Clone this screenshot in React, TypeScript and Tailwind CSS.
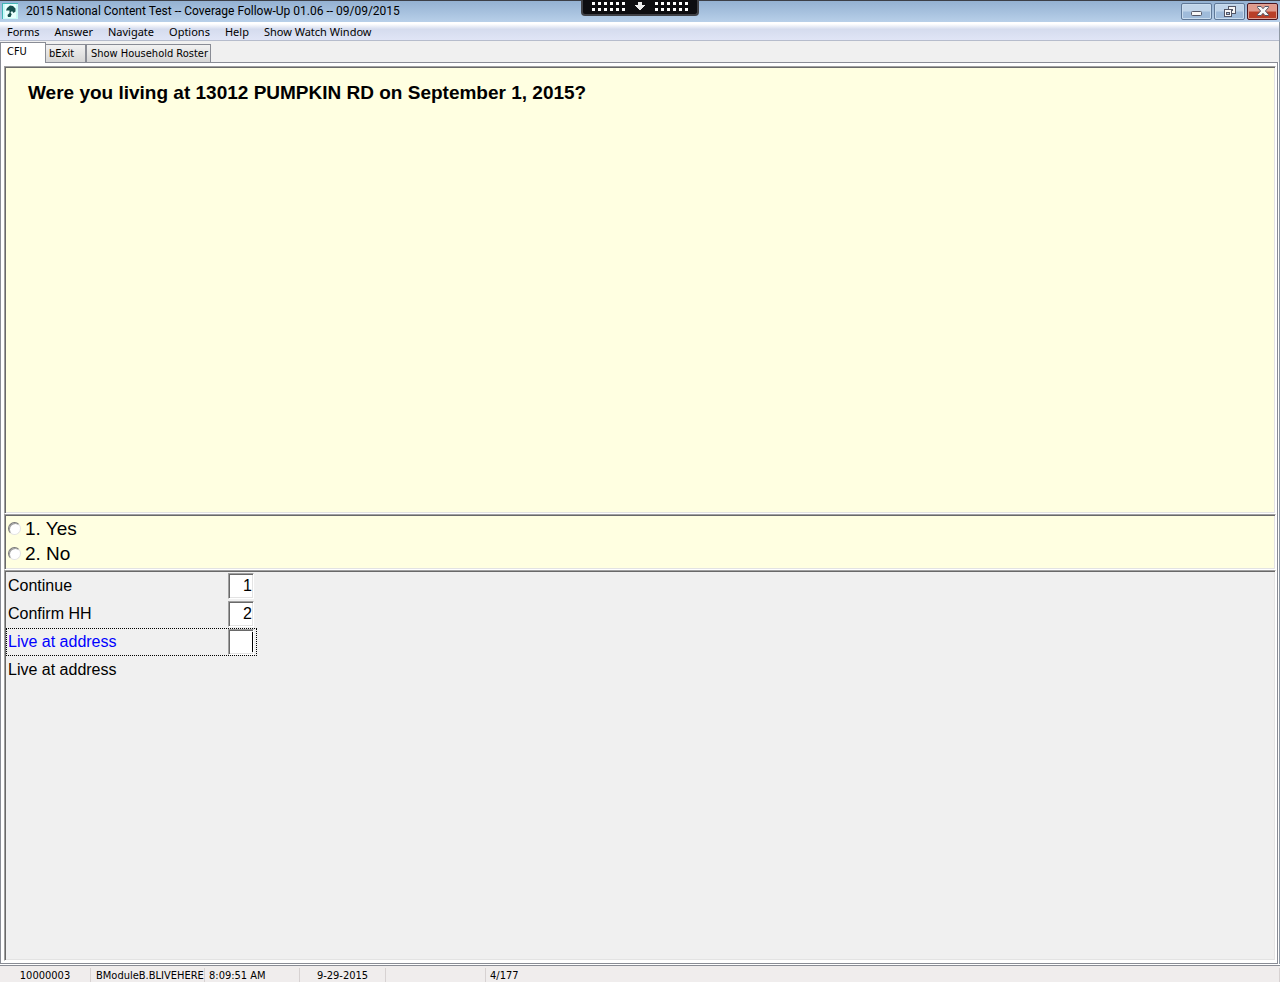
import React, { useState } from 'react';

const MENU_ITEMS = ['Forms', 'Answer', 'Navigate', 'Options', 'Help', 'Show Watch Window'];

const ANSWERS = [
  { value: '1', label: '1. Yes' },
  { value: '2', label: '2. No' },
];

// Two-tone bevel: light grey outside, dark grey inside
const SUNKEN = 'border border-t-[#a0a0a0] border-l-[#a0a0a0] border-r-white border-b-white shadow-[inset_1px_1px_0_#696969,inset_-1px_-1px_0_#e3e3e3]';

const AppIcon = () => (
  <svg width="16" height="16" viewBox="0 0 16 16">
    <rect width="16" height="16" fill="#42b5b5" />
    <rect x="1" y="1" width="15" height="15" fill="#c9fbf8" />
    <rect x="3" y="1" width="11" height="14" fill="#e9fffd" />
    <path d="M5 5L8 2.5 11 3 13.5 5.5v3l-2 1.5L10 8 8.5 9.5l1.2 1.8L8.5 14H6L5.5 12l2-2V7.5L4 7.5z" fill="#17504e" />
  </svg>
);

const MinimizeIcon = () => (
  <svg width="11" height="5" viewBox="0 0 11 5">
    <rect x="0.5" y="0.5" width="10" height="4" rx="1" fill="#f7f7f7" stroke="#535666" />
  </svg>
);

const RestoreIcon = () => (
  <svg width="12" height="11" viewBox="0 0 12 11" shapeRendering="crispEdges">
    <path d="M4 0h8v8H4z" fill="#535666" />
    <path d="M5 1h6v6H5z" fill="#f7f7f7" />
    <path d="M7 3h2v2H7z" fill="#535666" />
    <path d="M0 3h8v8H0z" fill="#535666" />
    <path d="M1 4h6v6H1z" fill="#f7f7f7" />
    <path d="M2 6h4v3H2z" fill="#535666" />
    <path d="M3 7h2v1H3z" fill="#a9c4e0" />
  </svg>
);

const CloseIcon = () => (
  <svg width="12" height="10" viewBox="0 0 12 10">
    <path
      d="M0.5 0.5h3.6L6 2.7 7.9 0.5h3.6v1L8.4 5l3.1 3.5v1H7.9L6 7.3 4.1 9.5H0.5v-1L3.6 5 0.5 1.5z"
      fill="#f7f7f7"
      stroke="#535666"
    />
  </svg>
);

const DOT_COLUMNS = [0, 6, 12, 18, 24, 30];

const Dots = () => (
  <svg width="33" height="9" viewBox="0 0 33 9" shapeRendering="crispEdges" fill="#fff">
    {DOT_COLUMNS.map(x => (
      <path key={x} d={`M${x} 0h3v3h-3zM${x} 6h3v3h-3z`} />
    ))}
  </svg>
);

const TitleBar = () => (
  <header className="relative flex h-[22px] items-center justify-between border-t border-[#3c3f47] bg-linear-to-b from-[#94b1d2] to-[#b8d0e9] pr-0.5 pb-px pl-0.5">
    <div className="flex items-center gap-2">
      <AppIcon />
      <h1 className="font-['Roboto','Noto_Sans',sans-serif] text-[12px] leading-4">
        2015 National Content Test -- Coverage Follow-Up 01.06 -- 09/09/2015
      </h1>
    </div>

    <div className="flex gap-0.5">
      <button aria-label="Minimize" className="flex h-[17px] w-[31px] items-end justify-center rounded-xs border border-[#5f7897] bg-linear-to-b from-[#c0d4e9] from-45% to-[#9fbbda] to-55% pb-[3px] shadow-[inset_0_0_0_1px_#c9dcee]">
        <MinimizeIcon />
      </button>
      <button aria-label="Restore" className="flex h-[17px] w-[31px] items-center justify-center rounded-xs border border-[#5f7897] bg-linear-to-b from-[#c0d4e9] from-45% to-[#9fbbda] to-55% shadow-[inset_0_0_0_1px_#c9dcee]">
        <RestoreIcon />
      </button>
      <button aria-label="Close" className="flex h-[17px] w-[31px] items-center justify-center rounded-xs border border-[#4b1620] bg-linear-to-b from-[#e09a8c] from-45% to-[#b93f28] to-55% shadow-[inset_0_0_0_1px_#dfa295]">
        <CloseIcon />
      </button>
    </div>

    {/* Remote session handle */}
    <div className="absolute -top-px left-1/2 flex h-4 w-[118px] -translate-x-1/2 items-start justify-center gap-[9px] rounded-b border-2 border-t-0 border-[#3f4045] bg-[#0d0d10] pt-0.5">
      <Dots />
      <svg width="12" height="9" viewBox="0 0 12 9" shapeRendering="crispEdges">
        <path d="M4 0h4v3h3v1h-1v1H9v1H8v1H7v1H5V7H4V6H3V5H2V4H1V3h3z" fill="#ececec" />
      </svg>
      <Dots />
    </div>
  </header>
);

const MenuBar = () => (
  <nav className="flex h-[19px] items-center gap-[15px] border-b border-[#b6bccc] bg-linear-to-b from-white from-10% via-[#d5dcee] via-40% to-[#e0e5f6] px-[7px] pt-px">
    {MENU_ITEMS.map(item => (
      <button key={item} className="font-['Noto_Sans',sans-serif] text-[11px] leading-4 whitespace-nowrap">
        {item}
      </button>
    ))}
  </nav>
);

const TabStrip = () => (
  <div role="tablist" className="flex h-[21px] items-end bg-[#f0f0f0] font-['DejaVu_Sans_Condensed','DejaVu_Sans',sans-serif] text-[11px] leading-4">
    <button role="tab" aria-selected className="z-10 -mb-px h-[21px] w-[46px] border border-b-0 border-[#898c95] bg-white pb-0.5 pl-1.5 text-left">
      CFU
    </button>
    <button role="tab" aria-selected={false} className="h-[18px] w-10 border-t border-r border-[#898c95] bg-linear-to-b from-[#f2f2f2] to-[#d6d6d6] pl-[3px] text-left">
      bExit
    </button>
    <button role="tab" aria-selected={false} className="h-[18px] border border-b-0 border-[#898c95] bg-linear-to-b from-[#f2f2f2] to-[#d6d6d6] pr-0.5 pl-1 text-left whitespace-nowrap">
      Show Household Roster
    </button>
  </div>
);

interface FieldRowProps {
  id: string;
  label: string;
  value: string;
  active?: boolean;
  onChange: (value: string) => void;
}

const FieldRow: React.FC<FieldRowProps> = ({ id, label, value, active, onChange }) => (
  <div className={`flex h-7 w-[251px] items-center justify-between border border-dotted pr-0.5 pl-px ${active ? 'border-black text-[#0000ff]' : 'border-transparent'}`}>
    <label htmlFor={id}>{label}</label>
    <div className="relative flex">
      <input
        id={id}
        value={value}
        onChange={e => onChange(e.target.value)}
        className={`size-[26px] bg-white p-px text-right text-black outline-none ${SUNKEN}`}
      />
      {active && <span className="absolute top-[3px] right-px h-5 w-px bg-black" />}
    </div>
  </div>
);

const STATUS_CELL = 'border-r border-[#d7d2d2] whitespace-nowrap';

export default function App() {
  const [answer, setAnswer] = useState('');
  const [fields, setFields] = useState({ proceed: '1', confirm: '2' });

  return (
    <div className="flex min-h-screen flex-col bg-white font-['Liberation_Sans',Arial,sans-serif] text-black">
      <TitleBar />

      <div className="flex flex-1 flex-col border-r border-[#8f99a5]">
        <MenuBar />
        <TabStrip />

        <main className="mr-px flex flex-1 flex-col border border-[#898c95] pt-[3px] pr-px pb-0.5 pl-[3px]">
          <section className={`h-[448px] bg-[#ffffe1] px-[23px] pt-[14px] ${SUNKEN}`}>
            <h2 className="text-[19px] leading-6 font-bold">
              Were you living at 13012 PUMPKIN RD on September 1, 2015?
            </h2>
          </section>

          <fieldset className={`h-14 bg-[#ffffe1] p-px ${SUNKEN}`}>
            {ANSWERS.map(option => (
              <label key={option.value} className="flex h-[25px] items-center gap-1 pl-0.5 text-[19px] leading-6">
                <input
                  type="radio"
                  name="answer"
                  value={option.value}
                  checked={answer === option.value}
                  onChange={() => setAnswer(option.value)}
                  className="size-[13px] appearance-none rounded-full border border-t-[#777] border-l-[#777] border-r-[#e3e3e3] border-b-[#e3e3e3] bg-white shadow-[inset_1px_1px_0_#a0a0a0] checked:bg-black"
                />
                {option.label}
              </label>
            ))}
          </fieldset>

          <section className={`flex-1 bg-[#f0f0f0] p-px text-base leading-6 ${SUNKEN}`}>
            <FieldRow id="proceed" label="Continue" value={fields.proceed} onChange={v => setFields({ ...fields, proceed: v })} />
            <FieldRow id="confirm" label="Confirm HH" value={fields.confirm} onChange={v => setFields({ ...fields, confirm: v })} />
            <FieldRow id="live" label="Live at address" value={answer} active onChange={setAnswer} />
            <p className="flex h-7 items-center pl-0.5">Live at address</p>
          </section>
        </main>
      </div>

      <footer className="mt-px flex h-[17px] border-t border-[#898c95] bg-[#f0eded] pt-0.5 font-['DejaVu_Sans_Condensed','DejaVu_Sans',sans-serif] text-[11px] leading-4">
        <span className={`w-[91px] text-center ${STATUS_CELL}`}>10000003</span>
        <span className={`w-[114px] pl-[5px] ${STATUS_CELL}`}>BModuleB.BLIVEHERE</span>
        <span className={`w-[95px] pl-1 ${STATUS_CELL}`}>8:09:51 AM</span>
        <span className={`w-[86px] text-center ${STATUS_CELL}`}>9-29-2015</span>
        <span className={`w-[100px] ${STATUS_CELL}`} />
        <span className={`flex-1 pl-1 ${STATUS_CELL}`}>4/177</span>
      </footer>
    </div>
  );
}
